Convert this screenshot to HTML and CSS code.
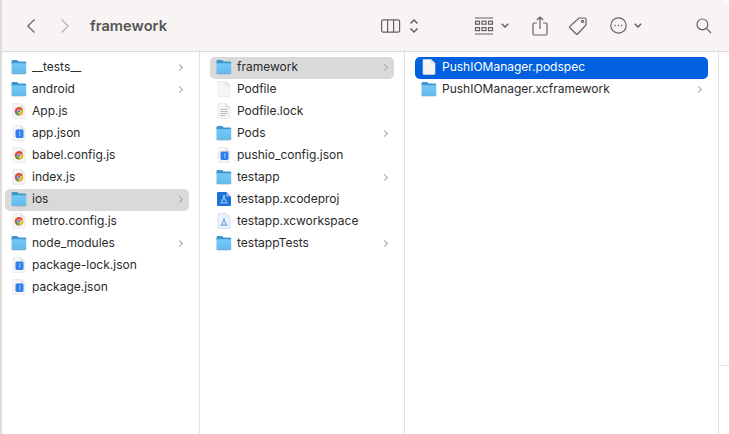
FILE: index.html
```html
<!DOCTYPE html>
<html lang="en">
<head>
    <meta charset="UTF-8">
    <title>framework</title>
    <link rel="stylesheet" href="styles.css">
</head>
<body>
    <svg class="defs" width="0" height="0">
        <defs>
            <linearGradient id="fold" x1="0" y1="0" x2="0" y2="1">
                <stop offset="0" stop-color="#74c8f5"/>
                <stop offset="1" stop-color="#62bbee"/>
            </linearGradient>
            <symbol id="folder" viewBox="0 0 16 16">
                <path d="M.5 5V2.4C.5 1.6 1 1 1.8 1H5.6C6.2 1 6.5 1.2 6.9 1.6L7.6 2.4H13.8C14.6 2.4 15.2 3 15.2 3.8V5Z" fill="#3e96cf"/>
                <path d="M.5 4.2H15.2V13.6C15.2 14.4 14.6 15 13.8 15H1.8C1 15 .5 14.4 .5 13.6Z" fill="url(#fold)"/>
                <path d="M.5 13.6C.5 14.4 1 15 1.8 15H13.8C14.6 15 15.2 14.4 15.2 13.6" fill="none" stroke="#8fa0ab" stroke-width=".6"/>
            </symbol>
            <symbol id="page" viewBox="0 0 16 16">
                <path d="M2 .5H10L14 4.5V14.4C14 15 13.6 15.5 13 15.5H3C2.4 15.5 2 15 2 14.4Z" fill="#f5f5f5" stroke="#e2e2e2" stroke-width=".6"/>
                <path d="M10 .5V4.5H14Z" fill="#e6e6e6" stroke="#dedede" stroke-width=".5"/>
            </symbol>
            <symbol id="lines" viewBox="0 0 16 16">
                <use href="#page" width="16" height="16"/>
                <path d="M4.5 6.5H11.5M4.5 8.5H11.5M4.5 10.5H11.5M4.5 12.5H9" stroke="#a9a9a9" stroke-width=".7"/>
            </symbol>
            <symbol id="chrome" viewBox="0 0 16 16">
                <use href="#page" width="16" height="16"/>
                <circle cx="8" cy="8.2" r="4.2" fill="#dd4b39"/>
                <path d="M8 8.2L4.4 10.3A4.2 4.2 0 0 0 8 12.4Z" fill="#4aa657"/>
                <path d="M8 8.2V12.4A4.2 4.2 0 0 0 11.7 6.2Z" fill="#f4c20d"/>
                <circle cx="8" cy="8.2" r="1.6" fill="#3f7fe0" stroke="#fff" stroke-width=".5"/>
            </symbol>
            <symbol id="json" viewBox="0 0 16 16">
                <use href="#page" width="16" height="16"/>
                <rect x="4.5" y="4.5" width="8" height="8.5" rx="1.4" fill="#2f80ea"/>
                <path d="M8.8 6.2V11.2" stroke="#9cc4f6" stroke-width="1"/>
            </symbol>
            <symbol id="xcodeproj" viewBox="0 0 16 16">
                <path d="M2 1H10.5L15 5.5V13.8C15 14.5 14.5 15 13.8 15H2C1.5 15 1 14.5 1 13.8V2C1 1.5 1.5 1 2 1Z" fill="#1a72d6"/>
                <path d="M10.5 1V5.5H15Z" fill="#8fbdf0"/>
                <path d="M4 12H12M8.8 4.5L5.6 11M7.2 4.5L10.4 11" stroke="#a9d0f8" stroke-width="1.2" fill="none"/>
            </symbol>
            <symbol id="xcworkspace" viewBox="0 0 16 16">
                <path d="M2.5 .5H10L14 4.5V14.4C14 15 13.6 15.5 13 15.5H3C2.5 15.5 2.1 15 2.1 14.4V1Z" fill="#eef4fc" stroke="#bcd5f2" stroke-width=".7"/>
                <path d="M10 .5V4.5H14Z" fill="#d5e5f8"/>
                <path d="M4.5 12.2H11.5M8.6 5.5L5.8 11.4M7.4 5.5L10.2 11.4" stroke="#6ea5e6" stroke-width="1.2" fill="none"/>
            </symbol>
        </defs>
    </svg>

    <div class="window">
        <header class="toolbar">
            <svg class="tb-icon back" width="10" height="16" viewBox="0 0 10 16"><path d="M8.5 1.5L1.8 8L8.5 14.5"/></svg>
            <svg class="tb-icon forward" width="10" height="16" viewBox="0 0 10 16"><path d="M1.5 1.5L8.2 8L1.5 14.5"/></svg>
            <h1 class="title">framework</h1>
            <svg class="tb-icon view" width="20" height="14" viewBox="0 0 20 14"><rect x=".6" y=".8" width="18" height="12.4" rx="1.8"/><path d="M6.6 1V13M12.6 1V13"/></svg>
            <svg class="tb-icon updown" width="10" height="16" viewBox="0 0 10 16"><path d="M1.5 5.5L5 2L8.5 5.5M1.5 10.5L5 14L8.5 10.5"/></svg>
            <svg class="tb-icon group" width="20" height="18" viewBox="0 0 20 18"><path d="M1 1H19M1 17H19"/><rect x="1.5" y="4.2" width="4" height="3"/><rect x="8" y="4.2" width="4" height="3"/><rect x="14.5" y="4.2" width="4" height="3"/><rect x="1.5" y="10.6" width="4" height="3"/><rect x="8" y="10.6" width="4" height="3"/><rect x="14.5" y="10.6" width="4" height="3"/></svg>
            <svg class="tb-icon chev" width="8" height="5" viewBox="0 0 8 5"><path d="M.8 .8L4 4L7.2 .8"/></svg>
            <svg class="tb-icon share" width="16" height="20" viewBox="0 0 16 20"><path d="M5 7H2.2C1.4 7 1 7.4 1 8.2V17.8C1 18.6 1.4 19 2.2 19H13.8C14.6 19 15 18.6 15 17.8V8.2C15 7.4 14.6 7 13.8 7H11M8 13V1M4.8 4L8 1L11.2 4"/></svg>
            <svg class="tb-icon tag" width="20" height="20" viewBox="0 0 20 20"><path d="M11 2H17C17.6 2 18 2.4 18 3V9L9.6 18C9.2 18.4 8.6 18.4 8.2 18L1.8 11.8C1.4 11.4 1.4 10.8 1.8 10.4Z"/><circle cx="14.6" cy="5.4" r="1.1"/></svg>
            <svg class="tb-icon more" width="17" height="17" viewBox="0 0 17 17"><circle cx="8.5" cy="8.5" r="7.7"/><path class="dots" d="M4.6 8.5H5.8M7.9 8.5H9.1M11.2 8.5H12.4"/></svg>
            <svg class="tb-icon chev chev-more" width="8" height="5" viewBox="0 0 8 5"><path d="M.8 .8L4 4L7.2 .8"/></svg>
            <svg class="tb-icon search" width="16" height="16" viewBox="0 0 16 16"><circle cx="6.4" cy="6.4" r="5.4"/><path d="M10.4 10.4L15 15"/></svg>
        </header>

        <main class="browser">
            <section class="column col-1">
                <div class="row"><svg class="icon"><use href="#folder"/></svg><span class="name">__tests__</span><i class="arrow"></i></div>
                <div class="row"><svg class="icon"><use href="#folder"/></svg><span class="name">android</span><i class="arrow"></i></div>
                <div class="row"><svg class="icon"><use href="#chrome"/></svg><span class="name">App.js</span></div>
                <div class="row"><svg class="icon"><use href="#json"/></svg><span class="name">app.json</span></div>
                <div class="row"><svg class="icon"><use href="#chrome"/></svg><span class="name">babel.config.js</span></div>
                <div class="row"><svg class="icon"><use href="#chrome"/></svg><span class="name">index.js</span></div>
                <div class="row active"><svg class="icon"><use href="#folder"/></svg><span class="name">ios</span><i class="arrow"></i></div>
                <div class="row"><svg class="icon"><use href="#chrome"/></svg><span class="name">metro.config.js</span></div>
                <div class="row"><svg class="icon"><use href="#folder"/></svg><span class="name">node_modules</span><i class="arrow"></i></div>
                <div class="row"><svg class="icon"><use href="#json"/></svg><span class="name">package-lock.json</span></div>
                <div class="row"><svg class="icon"><use href="#json"/></svg><span class="name">package.json</span></div>
            </section>
            <section class="column col-2">
                <div class="row active"><svg class="icon"><use href="#folder"/></svg><span class="name">framework</span><i class="arrow"></i></div>
                <div class="row"><svg class="icon"><use href="#page"/></svg><span class="name">Podfile</span></div>
                <div class="row"><svg class="icon"><use href="#lines"/></svg><span class="name">Podfile.lock</span></div>
                <div class="row"><svg class="icon"><use href="#folder"/></svg><span class="name">Pods</span><i class="arrow"></i></div>
                <div class="row"><svg class="icon"><use href="#json"/></svg><span class="name">pushio_config.json</span></div>
                <div class="row"><svg class="icon"><use href="#folder"/></svg><span class="name">testapp</span><i class="arrow"></i></div>
                <div class="row"><svg class="icon"><use href="#xcodeproj"/></svg><span class="name">testapp.xcodeproj</span></div>
                <div class="row"><svg class="icon"><use href="#xcworkspace"/></svg><span class="name">testapp.xcworkspace</span></div>
                <div class="row"><svg class="icon"><use href="#folder"/></svg><span class="name">testappTests</span><i class="arrow"></i></div>
            </section>
            <section class="column col-3">
                <div class="row selected"><svg class="icon"><use href="#page"/></svg><span class="name">PushIOManager.podspec</span></div>
                <div class="row"><svg class="icon"><use href="#folder"/></svg><span class="name">PushIOManager.xcframework</span><i class="arrow"></i></div>
            </section>
            <aside class="column col-4">
                <div class="preview"></div>
            </aside>
        </main>
    </div>
</body>
</html>
```

FILE: styles.css
```css
html, body {
    margin: 0;
    padding: 0;
    height: 100%;
    overflow: hidden;
}
body {
    background-color: #fff;
    font-family: Inter, "Liberation Sans", Arial, sans-serif;
    font-size: 12px;
    color: #2a2a2a;
}
.defs {
    position: absolute;
}
.window {
    height: 434px;
    border-left: 2px solid #e0dedd;
    display: flex;
    flex-direction: column;
    box-sizing: border-box;
}
.toolbar {
    height: 51px;
    flex: none;
    background-color: #f7f4f3;
    border-bottom: 1px solid #dcdbda;
    border-top-right-radius: 7px;
    display: flex;
    align-items: center;
}
.toolbar svg {
    flex: none;
}
.tb-icon {
    fill: none;
    stroke: #636261;
    stroke-width: 1.2;
}
.back {
    margin-left: 24px;
}
.forward {
    margin-left: 24px;
    stroke: #b5b3b2;
}
.title {
    margin: 0 0 0 20px;
    font-size: 14.7px;
    font-weight: 600;
    color: #555453;
    width: 291px;
    flex: none;
}
.updown {
    margin-left: 8px;
    stroke-width: 1.5;
}
.group {
    margin-left: 55px;
}
.chev {
    margin-left: 7px;
    stroke-width: 1.5;
}
.share {
    margin-left: 23px;
}
.tag {
    margin-left: 20px;
}
.more {
    margin-left: 22px;
}
.dots {
    stroke-width: 1.3;
}
.search {
    margin-left: 54px;
}
.browser {
    flex: 1;
    display: flex;
    min-height: 0;
}
.column {
    flex: none;
    box-sizing: border-box;
    border-right: 1px solid #e2e2e2;
    padding: 5px 10px;
}
.col-1 {
    width: 198px;
    padding-left: 3px;
}
.col-2 {
    width: 205px;
}
.col-3 {
    width: 314px;
}
.col-4 {
    flex: 1;
    border-right: 0;
    padding: 0;
}
.preview {
    height: 313px;
    border-bottom: 1px solid #e2e2e2;
}
.row {
    height: 22px;
    box-sizing: border-box;
    display: flex;
    align-items: center;
    border-radius: 5px;
    padding: 0 5px 2px 6px;
}
.row .icon {
    width: 16px;
    height: 16px;
    flex: none;
    margin-right: 5px;
}
.name {
    flex: 1;
    white-space: nowrap;
    padding-bottom: 2px;
}
.arrow {
    width: 5px;
    height: 5px;
    flex: none;
    margin-right: 2px;
    border-top: 1px solid #a8a8a8;
    border-right: 1px solid #a8a8a8;
    box-sizing: border-box;
    transform: rotate(45deg);
}
.active {
    background-color: #d9d9d9;
}
.selected {
    background-color: #0060df;
    color: #fff;
}
```
